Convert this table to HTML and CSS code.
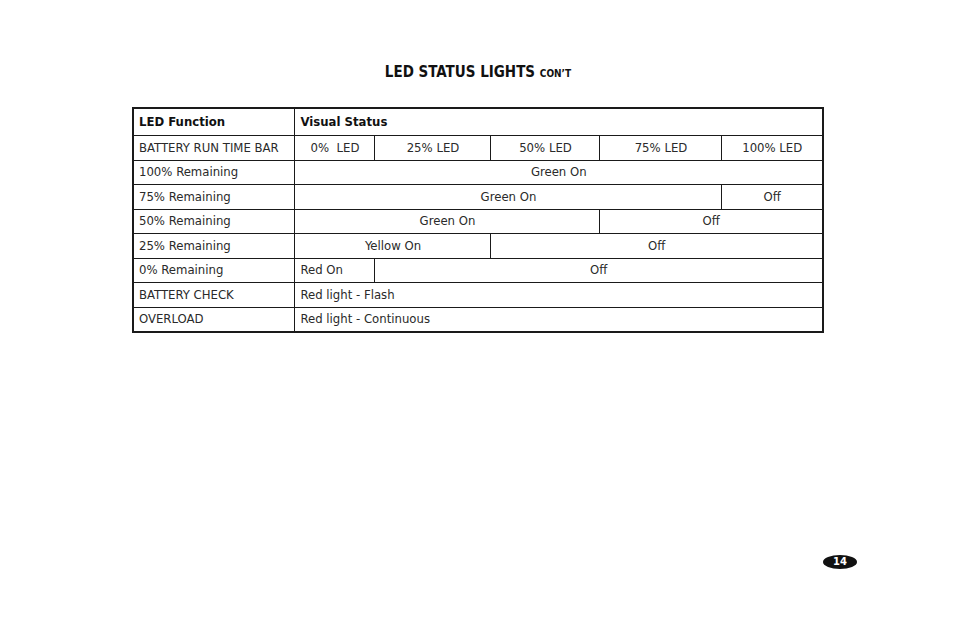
FILE: index.html
```html
<!DOCTYPE html>
<html>
<head>
<meta charset="utf-8">
<link rel="stylesheet" href="styles.css">
</head>
<body>
<div class="page">
  <h1 class="title">LED STATUS LIGHTS <span class="cont">CON’T</span></h1>
  <table class="led">
    <colgroup>
      <col class="c0"><col class="c1"><col class="c2"><col class="c3"><col class="c4"><col class="c5">
    </colgroup>
    <tr class="head">
      <td>LED Function</td>
      <td colspan="5">Visual Status</td>
    </tr>
    <tr>
      <td>BATTERY RUN TIME BAR</td>
      <td class="ctr">0%&nbsp;&nbsp;LED</td>
      <td class="ctr">25% LED</td>
      <td class="ctr">50% LED</td>
      <td class="ctr">75% LED</td>
      <td class="ctr">100% LED</td>
    </tr>
    <tr>
      <td>100% Remaining</td>
      <td colspan="5" class="ctr">Green On</td>
    </tr>
    <tr>
      <td>75% Remaining</td>
      <td colspan="4" class="ctr">Green On</td>
      <td class="ctr">Off</td>
    </tr>
    <tr>
      <td>50% Remaining</td>
      <td colspan="3" class="ctr">Green On</td>
      <td colspan="2" class="ctr">Off</td>
    </tr>
    <tr>
      <td>25% Remaining</td>
      <td colspan="2" class="ctr">Yellow On</td>
      <td colspan="3" class="ctr">Off</td>
    </tr>
    <tr>
      <td>0% Remaining</td>
      <td>Red On</td>
      <td colspan="4" class="ctr">Off</td>
    </tr>
    <tr>
      <td>BATTERY CHECK</td>
      <td colspan="5">Red light - Flash</td>
    </tr>
    <tr>
      <td>OVERLOAD</td>
      <td colspan="5">Red light - Continuous</td>
    </tr>
  </table>
  <div class="footer"><span class="pagenum">14</span></div>
</div>
</body>
</html>
```
FILE: styles.css
```css
html, body {
  margin: 0;
  padding: 0;
  background: #fff;
}
body {
  font-family: "DejaVu Sans Condensed", "DejaVu Sans", sans-serif;
  color: #1a1a1a;
}
.page {
  width: 954px;
  height: 618px;
  padding-top: 62px;
  padding-left: 2px;
  box-sizing: border-box;
}
.title {
  margin: 0;
  text-align: center;
  font-size: 15px;
  font-weight: bold;
  line-height: 20px;
  height: 45px;
  color: #111;
}
.cont {
  font-size: 10px;
}
.led {
  margin: 0 auto;
  width: 690px;
  table-layout: fixed;
  border-collapse: collapse;
  border: 2px solid #1a1a1a;
  font-size: 13px;
}
.c0 { width: 162px; }
.c1 { width: 80px; }
.c2 { width: 116px; }
.c3 { width: 109px; }
.c4 { width: 122px; }
.c5 { width: 101px; }
.led td {
  border: 1px solid #1a1a1a;
  padding: 0 5px;
  height: 23.5px;
  line-height: 16px;
  white-space: nowrap;
  vertical-align: middle;
  color: #2a2a2a;
}
.led tr.head td {
  height: 26px;
  font-weight: bold;
  color: #111;
}
.led td.ctr {
  text-align: center;
}
.footer {
  display: flex;
  justify-content: flex-end;
  padding-right: 97px;
  margin-top: 222px;
}
.pagenum {
  display: inline-flex;
  align-items: center;
  justify-content: center;
  width: 34px;
  height: 14px;
  border-radius: 50%;
  background: #111;
  color: #fff;
  font-family: "DejaVu Sans", sans-serif;
  font-weight: bold;
  font-size: 10px;
  line-height: 14px;
}
```
